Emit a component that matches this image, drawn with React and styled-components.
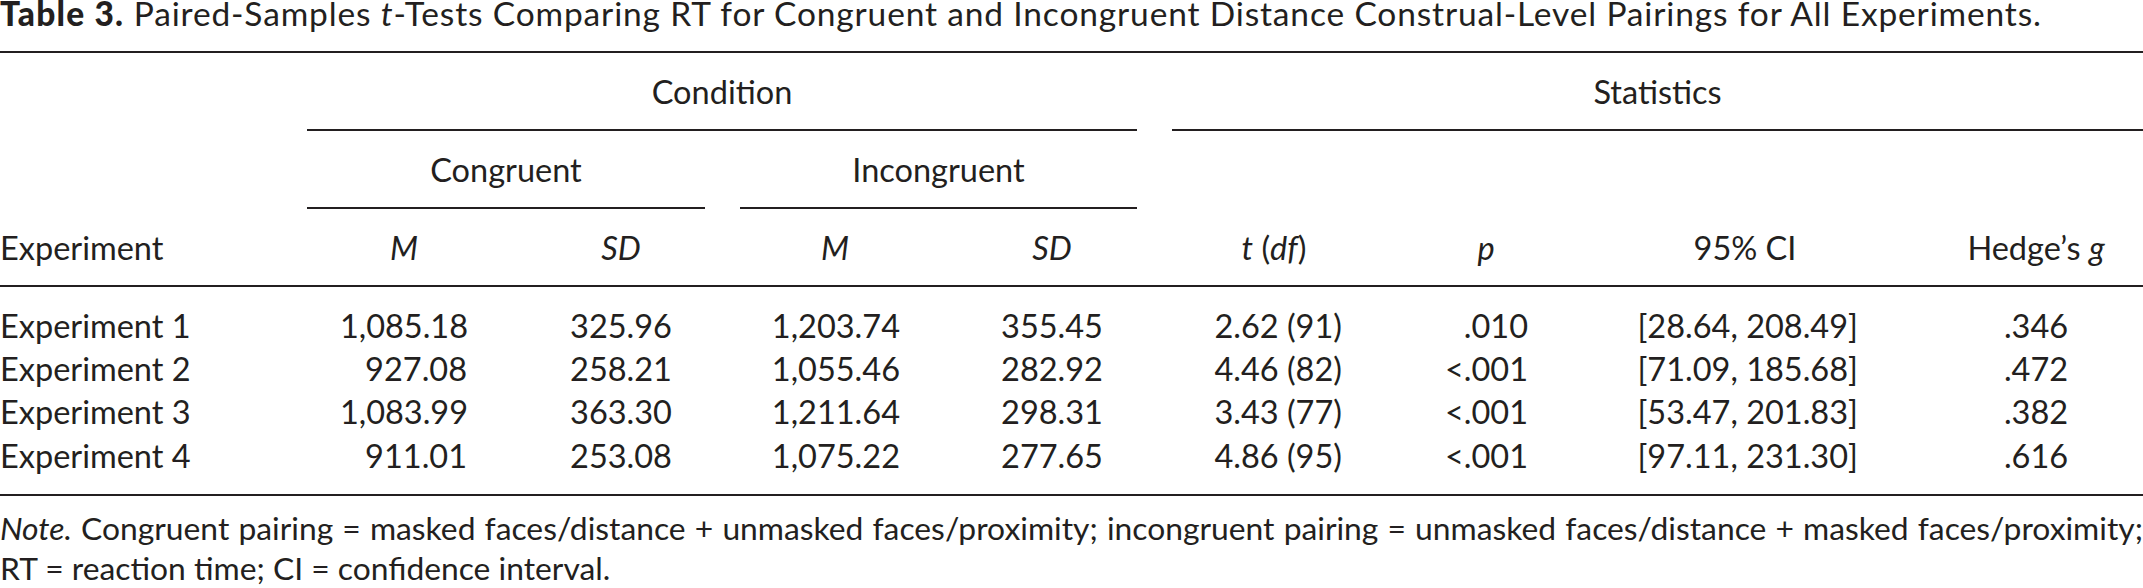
import React from "react";
import styled, { createGlobalStyle } from "styled-components";

const ink = "#231f20";
const COLUMNS = "307px 194px 240px 188px 246px 198px 226px 292px 1fr";

const GlobalStyle = createGlobalStyle`
  html, body { margin: 0; padding: 0; background: #ffffff; }
  body { font-family: Lato, "Liberation Sans", sans-serif; color: ${ink}; }
`;

const Page = styled.div`
  width: 2143px;
  display: flex;
  flex-direction: column;
`;

const Caption = styled.div`
  font-size: 33.5px;
  letter-spacing: 0.85px;
  line-height: 26px;
  height: 26px;
  white-space: nowrap;
  margin-bottom: 25px;
`;

const CaptionLabel = styled.span`
  font-weight: 900;
  letter-spacing: 1.2px;
`;

const Table = styled.div`
  border-top: 2px solid ${ink};
  border-bottom: 2px solid ${ink};
  font-size: 32.5px;
`;

const HeadGrid = styled.div`
  display: grid;
  grid-template-columns: ${COLUMNS};
`;

const BodyGrid = styled.div`
  display: grid;
  grid-template-columns: ${COLUMNS};
  padding: 16.6px 0 17px;
  line-height: 43.33px;
`;

const HeadCell = styled.div`
  grid-column: ${(p) => p.$col};
  padding: 17px 0 16px ${(p) => p.$pl || 0}px;
  margin: 0 ${(p) => p.$mr || 0}px 0 ${(p) => p.$ml || 0}px;
  line-height: 43px;
  white-space: nowrap;
  text-align: ${(p) => p.$align || "center"};
  border-bottom: 2px solid ${(p) => (p.$rule ? ink : "transparent")};
`;

const Cell = styled.div`
  padding-left: ${(p) => p.$pl || 0}px;
  white-space: nowrap;
  text-align: ${(p) => p.$align || "center"};
`;

const Num = styled.span`
  display: inline-block;
  min-width: ${(p) => p.$w}px;
  text-align: right;
`;

const I = styled.i`
  font-style: italic;
`;

const Note = styled.p`
  margin: 12px 0 0;
  font-size: 31.8px;
  line-height: 40px;
  text-align: justify;
`;

const cols = [
  { align: "left" },
  { w: 126 },
  { w: 100 },
  { w: 130 },
  { w: 100 },
  { w: 136 },
  { w: 84 },
  { w: 226 },
  { w: 60, pl: 38 },
];

const rows = [
  ["Experiment 1", "1,085.18", "325.96", "1,203.74", "355.45", "2.62 (91)", ".010", "[28.64, 208.49]", ".346"],
  ["Experiment 2", "927.08", "258.21", "1,055.46", "282.92", "4.46 (82)", "<.001", "[71.09, 185.68]", ".472"],
  ["Experiment 3", "1,083.99", "363.30", "1,211.64", "298.31", "3.43 (77)", "<.001", "[53.47, 201.83]", ".382"],
  ["Experiment 4", "911.01", "253.08", "1,075.22", "277.65", "4.86 (95)", "<.001", "[97.11, 231.30]", ".616"],
];

const headers = [
  "Experiment",
  <I>M</I>,
  <I>SD</I>,
  <I>M</I>,
  <I>SD</I>,
  <>
    <I>t</I> (<I>df</I>)
  </>,
  <I>p</I>,
  "95% CI",
  <>
    Hedge’s <I>g</I>
  </>,
];

export default function App() {
  return (
    <>
      <GlobalStyle />
      <Page>
        <Caption>
          <CaptionLabel>Table 3.</CaptionLabel> Paired-Samples <I>t</I>-Tests Comparing RT for
          Congruent and Incongruent Distance Construal-Level Pairings for All Experiments.
        </Caption>
        <Table>
          <HeadGrid>
            <HeadCell $col="1 / 2" />
            <HeadCell $col="2 / 6" $rule $mr={38}>
              Condition
            </HeadCell>
            <HeadCell $col="6 / 10" $rule $ml={-3}>
              Statistics
            </HeadCell>

            <HeadCell $col="1 / 2" />
            <HeadCell $col="2 / 4" $rule $mr={36}>
              Congruent
            </HeadCell>
            <HeadCell $col="4 / 6" $rule $mr={38} $ml={-1}>
              Incongruent
            </HeadCell>
            <HeadCell $col="6 / 10" />

            {headers.map((h, i) => (
              <HeadCell key={i} $col={`${i + 1} / ${i + 2}`} $rule $align={cols[i].align} $pl={cols[i].pl}>
                {h}
              </HeadCell>
            ))}
          </HeadGrid>
          <BodyGrid>
            {rows.map((r, ri) =>
              r.map((v, ci) => (
                <Cell key={`${ri}-${ci}`} $align={cols[ci].align} $pl={cols[ci].pl}>
                  {ci === 0 ? v : <Num $w={cols[ci].w}>{v}</Num>}
                </Cell>
              ))
            )}
          </BodyGrid>
        </Table>
        <Note>
          <I>Note.</I> Congruent pairing = masked faces/distance + unmasked faces/proximity; incongruent
          pairing = unmasked faces/distance + masked faces/proximity; RT = reaction time; CI = confidence
          interval.
        </Note>
      </Page>
    </>
  );
}
